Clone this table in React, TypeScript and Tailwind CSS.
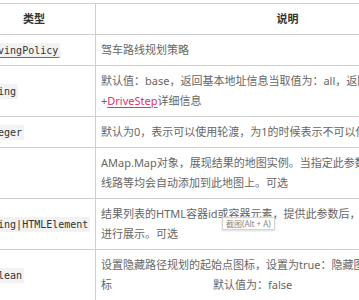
const Code = ({ children, link }: { children: React.ReactNode; link?: boolean }) => (
  <code
    className={
      link
        ? "rounded-[2px] border-b border-[#e3306c] bg-[#f2f2f2] px-[2px] pt-[2px] pb-[1px] font-['DejaVu_Sans_Mono',monospace] text-[10px] text-[#333]"
        : "rounded-[2px] bg-[#f2f2f2] px-[2px] py-[2px] font-['DejaVu_Sans_Mono',monospace] text-[10px] text-[#333]"
    }
  >
    {children}
  </code>
);

const DriveStep = () => (
  <a className="text-[#e3306c] underline decoration-[#e3306c] underline-offset-2">DriveStep</a>
);

const rows = [
  {
    type: (
      <a>
        <Code link>DrivingPolicy</Code>
      </a>
    ),
    desc: [<>驾车路线规划策略</>],
  },
  {
    type: <Code>String</Code>,
    desc: [
      <>默认值：base，返回基本地址信息当取值为：all，返回<DriveStep />基本信息</>,
      <>
        <span className="text-[#666]">+</span>
        <DriveStep />详细信息
      </>,
    ],
  },
  {
    type: <Code>Integer</Code>,
    desc: [<>默认为0，表示可以使用轮渡，为1的时候表示不可以使用轮渡</>],
  },
  {
    type: <Code>Map</Code>,
    desc: [
      <>AMap.Map对象，展现结果的地图实例。当指定此参数后，搜索结果的标注、</>,
      <>线路等均会自动添加到此地图上。可选</>,
    ],
  },
  {
    type: <Code>String|HTMLElement</Code>,
    desc: [
      <>结果列表的HTML容器id或容器元素，提供此参数后，结果列表将在此容器中</>,
      <>进行展示。可选</>,
    ],
  },
  {
    type: <Code>Boolean</Code>,
    desc: [
      <>设置隐藏路径规划的起始点图标，设置为true：隐藏图标；设置为false：显示图</>,
      <>
        标<span className="ml-[101px]">默认值为：false</span>
      </>,
    ],
  },
];

export default function App() {
  return (
    <div className="relative h-[300px] w-[359px] overflow-hidden bg-white pt-[3px] font-['Noto_Sans','Noto_Sans_CJK_SC',sans-serif] text-[11px]">
      <table className="-ml-[28px] w-[507px] table-fixed border-collapse">
        <colgroup>
          <col className="w-[123px]" />
          <col className="w-[384px]" />
        </colgroup>
        <thead>
          <tr className="text-[#333]">
            <th className="border border-[#cfcfcf] py-[5px] text-center font-bold leading-[20px]">类型</th>
            <th className="border border-[#cfcfcf] py-[5px] text-center font-bold leading-[20px]">说明</th>
          </tr>
        </thead>
        <tbody>
          {rows.map((r, i) => (
            <tr key={i}>
              <td className="whitespace-nowrap border border-[#cfcfcf] py-[5px] pl-[5px] align-middle">{r.type}</td>
              <td className="border border-[#cfcfcf] py-[5px] pl-[5px] align-middle leading-[20px] text-[#666]">
                {r.desc.map((line, j) => (
                  <div key={j} className="whitespace-nowrap">
                    {line}
                  </div>
                ))}
              </td>
            </tr>
          ))}
        </tbody>
      </table>
      <div className="absolute left-[222px] top-[217px] border border-[#d4d4d4] bg-white/90 px-[3px] text-[8px] leading-[11px] text-[#888] shadow-[0_1px_2px_rgba(0,0,0,0.15)]">
        截图(Alt + A)
      </div>
    </div>
  );
}
